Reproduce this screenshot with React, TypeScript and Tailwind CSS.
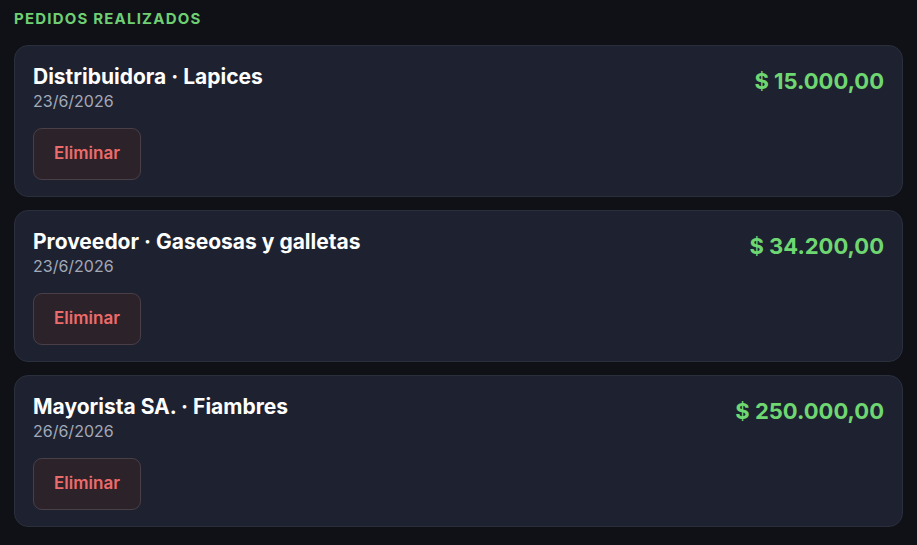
import React from 'react'

const pedidos = [
  { titulo: 'Distribuidora · Lapices', fecha: '23/6/2026', total: '$ 15.000,00' },
  { titulo: 'Proveedor · Gaseosas y galletas', fecha: '23/6/2026', total: '$ 34.200,00' },
  { titulo: 'Mayorista SA. · Fiambres', fecha: '26/6/2026', total: '$ 250.000,00' },
]

const App = () => {
  return (
    <div
      className="min-h-[545px] bg-[#0f1117] px-[14px] pt-[9px] pb-4"
      style={{ fontFamily: 'Inter, "Noto Sans", sans-serif' }}
    >
      <div className="text-[15px] leading-5 font-bold tracking-[0.08em] text-[#6fcf73] mb-4">
        PEDIDOS REALIZADOS
      </div>

      <div className="flex flex-col gap-[13px]">
        {pedidos.map((p) => (
          <div
            key={p.titulo}
            className="flex justify-between rounded-[14px] border border-[#2a2f3c] bg-[#1e2230] px-[18px] pt-[17px] pb-[16px]"
          >
            <div className="flex flex-col">
              <div className="text-[21px] leading-7 font-bold text-white">{p.titulo}</div>
              <div className="text-[16px] leading-5 text-[#a3a9b8]">{p.fecha}</div>
              <button className="mt-[17px] h-[52px] w-[108px] rounded-[9px] border border-[#4a3f47] bg-[#2b2329] text-[17px] font-semibold text-[#ee6b6b]">
                Eliminar
              </button>
            </div>
            <div className="pt-[4px] text-[22px] leading-7 font-bold text-[#6fd772]">{p.total}</div>
          </div>
        ))}
      </div>
    </div>
  )
}

export default App
